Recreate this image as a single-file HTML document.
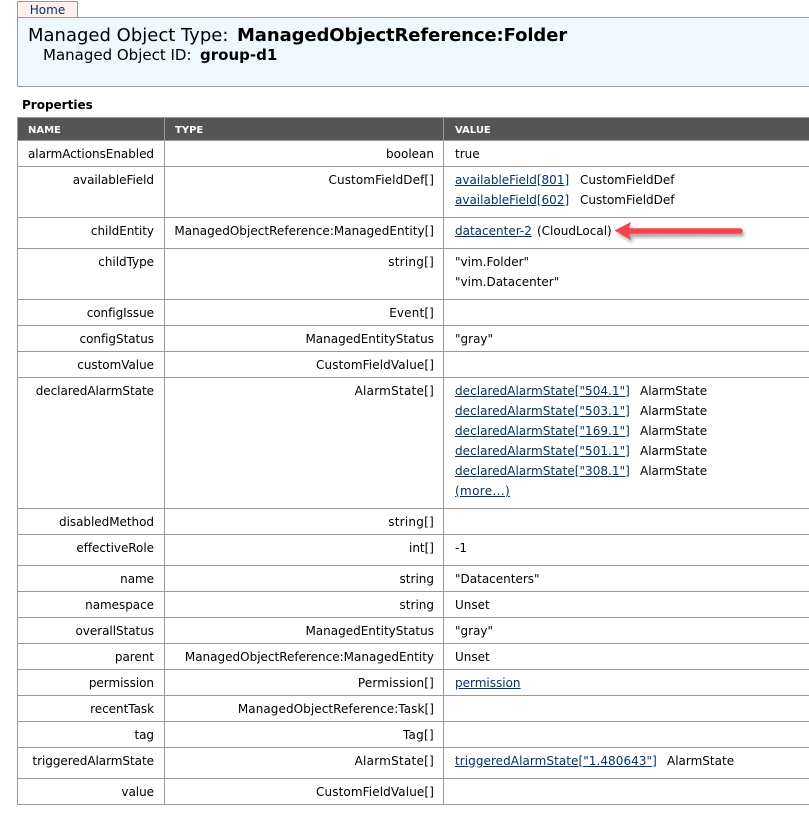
<!DOCTYPE html>
<html><head><meta charset="utf-8">
<style>
html,body{margin:0;padding:0;background:#fff;width:809px;height:817px;overflow:hidden}
body{position:relative;font-family:"DejaVu Sans","Liberation Sans",sans-serif;font-size:12px;color:#000}
div{position:absolute;white-space:nowrap}
.h{left:17px;width:792px;height:1px;background:#999}
.v{width:1px;background:#999}
.n,.y{text-align:right;line-height:16px;height:16px;margin-top:1px}
.n{left:17px;width:137px;letter-spacing:-.04px}
.y{left:165px;width:269px}
.l{left:455px;line-height:16px;height:16px;margin-top:1px}
a{color:#036;text-decoration:underline}
.q a{letter-spacing:.04px}
.th{top:125px;font-size:10px;font-weight:bold;color:#fff;line-height:12px}
</style></head><body>
<div style="left:17px;top:1px;width:59px;height:15px;background:#fff0ee;border:1px solid #999;border-bottom:0;text-align:center;line-height:16px;color:#036">Home</div>
<div style="left:17px;top:17px;width:792px;height:68px;background:#eff7ff;border:1px solid #999;border-right:0"></div>
<div style="left:28px;top:25px;font-size:18px;line-height:22px">Managed Object Type:</div>
<div style="left:237px;top:25px;font-size:18px;line-height:22px;font-weight:bold;letter-spacing:-.1px">ManagedObjectReference:Folder</div>
<div style="left:43px;top:46px;font-size:15px;line-height:18px">Managed Object ID:</div>
<div style="left:200px;top:46px;font-size:15px;line-height:18px;font-weight:bold">group-d1</div>
<div style="left:22px;top:98px;font-weight:bold;line-height:15px">Properties</div>

<div style="left:17px;top:117px;width:792px;height:23px;background:#555"></div>
<div class="h" style="top:117px"></div>
<div class="th" style="left:28px">NAME</div>
<div class="th" style="left:175px">TYPE</div>
<div class="th" style="left:455px">VALUE</div>

<div class="v" style="left:17px;top:117px;height:688px"></div>
<div class="v" style="left:164px;top:117px;height:688px"></div>
<div class="v" style="left:443px;top:117px;height:688px"></div>

<div class="h" style="top:140px"></div>
<div class="h" style="top:166px"></div>
<div class="h" style="top:217px"></div>
<div class="h" style="top:248px"></div>
<div class="h" style="top:299px"></div>
<div class="h" style="top:325px"></div>
<div class="h" style="top:351px"></div>
<div class="h" style="top:377px"></div>
<div class="h" style="top:508px"></div>
<div class="h" style="top:534px"></div>
<div class="h" style="top:565px"></div>
<div class="h" style="top:591px"></div>
<div class="h" style="top:617px"></div>
<div class="h" style="top:643px"></div>
<div class="h" style="top:669px"></div>
<div class="h" style="top:695px"></div>
<div class="h" style="top:721px"></div>
<div class="h" style="top:747px"></div>
<div class="h" style="top:778px"></div>
<div class="h" style="top:804px"></div>

<div class="n" style="top:145px">alarmActionsEnabled</div><div class="y" style="top:145px">boolean</div><div class="l" style="top:145px">true</div>
<div class="n" style="top:171px">availableField</div><div class="y" style="top:171px;letter-spacing:.1px">CustomFieldDef[]</div>
<div class="l" style="top:171px"><a href="#">availableField[801]</a></div><div class="l" style="left:580px;top:171px">CustomFieldDef</div>
<div class="l" style="top:191px"><a href="#">availableField[602]</a></div><div class="l" style="left:580px;top:191px">CustomFieldDef</div>
<div class="n" style="top:222px">childEntity</div><div class="y" style="top:222px;letter-spacing:.03px">ManagedObjectReference:ManagedEntity[]</div>
<div class="l" style="top:222px"><a href="#">datacenter-2</a></div><div class="l" style="left:537px;top:222px">(CloudLocal)</div>
<div class="n" style="top:253px">childType</div><div class="y" style="top:253px;letter-spacing:.25px">string[]</div>
<div class="l" style="top:253px">"vim.Folder"</div><div class="l" style="top:273px">"vim.Datacenter"</div>
<div class="n" style="top:304px">configIssue</div><div class="y" style="top:304px;letter-spacing:.15px">Event[]</div>
<div class="n" style="top:330px">configStatus</div><div class="y" style="top:330px">ManagedEntityStatus</div><div class="l" style="top:330px">"gray"</div>
<div class="n" style="top:356px">customValue</div><div class="y" style="top:356px;letter-spacing:.11px">CustomFieldValue[]</div>
<div class="n" style="top:382px">declaredAlarmState</div><div class="y" style="top:382px;letter-spacing:.25px">AlarmState[]</div>
<div class="l q" style="top:382px"><a href="#">declaredAlarmState["504.1"]</a></div><div class="l" style="left:640px;top:382px">AlarmState</div>
<div class="l q" style="top:402px"><a href="#">declaredAlarmState["503.1"]</a></div><div class="l" style="left:640px;top:402px">AlarmState</div>
<div class="l q" style="top:422px"><a href="#">declaredAlarmState["169.1"]</a></div><div class="l" style="left:640px;top:422px">AlarmState</div>
<div class="l q" style="top:442px"><a href="#">declaredAlarmState["501.1"]</a></div><div class="l" style="left:640px;top:442px">AlarmState</div>
<div class="l q" style="top:462px"><a href="#">declaredAlarmState["308.1"]</a></div><div class="l" style="left:640px;top:462px">AlarmState</div>
<div class="l" style="top:482px;letter-spacing:.35px"><a href="#">(more...)</a></div>
<div class="n" style="top:513px">disabledMethod</div><div class="y" style="top:513px;letter-spacing:.25px">string[]</div>
<div class="n" style="top:539px">effectiveRole</div><div class="y" style="top:539px">int[]</div><div class="l" style="top:539px">-1</div>
<div class="n" style="top:570px">name</div><div class="y" style="top:570px">string</div><div class="l" style="top:570px">"Datacenters"</div>
<div class="n" style="top:596px">namespace</div><div class="y" style="top:596px">string</div><div class="l" style="top:596px">Unset</div>
<div class="n" style="top:622px">overallStatus</div><div class="y" style="top:622px">ManagedEntityStatus</div><div class="l" style="top:622px">"gray"</div>
<div class="n" style="top:648px">parent</div><div class="y" style="top:648px">ManagedObjectReference:ManagedEntity</div><div class="l" style="top:648px">Unset</div>
<div class="n" style="top:674px">permission</div><div class="y" style="top:674px;letter-spacing:.17px">Permission[]</div><div class="l" style="top:674px"><a href="#">permission</a></div>
<div class="n" style="top:700px">recentTask</div><div class="y" style="top:700px;letter-spacing:.07px">ManagedObjectReference:Task[]</div>
<div class="n" style="top:726px">tag</div><div class="y" style="top:726px;letter-spacing:.3px">Tag[]</div>
<div class="n" style="top:752px">triggeredAlarmState</div><div class="y" style="top:752px;letter-spacing:.25px">AlarmState[]</div>
<div class="l" style="top:752px;letter-spacing:.06px"><a href="#">triggeredAlarmState["1.480643"]</a></div><div class="l" style="left:667px;top:752px">AlarmState</div>
<div class="n" style="top:783px">value</div><div class="y" style="top:783px;letter-spacing:.11px">CustomFieldValue[]</div>

<svg width="809" height="817" style="position:absolute;left:0;top:0;pointer-events:none">
<defs><filter id="s" x="-20%" y="-50%" width="140%" height="220%"><feGaussianBlur stdDeviation="1.5"/></filter></defs>
<g transform="translate(2,3)" fill="#777" stroke="#777" opacity=".65" filter="url(#s)"><path d="M630 232L740 231" stroke-width="5" stroke-linecap="round"/><path d="M615 230.5L631 222L628 231L631 240Z" stroke="none"/></g>
<path d="M627 231L740 231" stroke="#f9424e" stroke-width="5.5" stroke-linecap="round"/>
<path d="M614.5 230.5L631 222L628 231L631 240Z" fill="#f9424e"/>
</svg>
</body></html>
